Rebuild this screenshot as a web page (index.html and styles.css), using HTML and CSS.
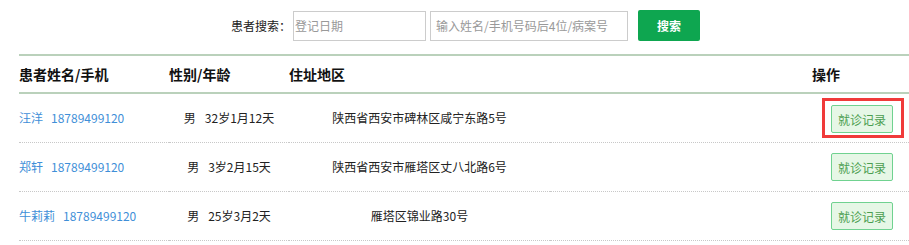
FILE: index.html
```html
<!DOCTYPE html>
<html lang="zh-CN">
<head>
    <meta charset="UTF-8">
    <meta name="viewport" content="width=device-width, initial-scale=1.0">
    <title>患者列表</title>
    <link rel="stylesheet" href="styles.css">
</head>
<body>
    <div class="search-bar">
        <label class="search-label" for="regDate">患者搜索：</label>
        <input type="text" id="regDate" class="date-input" placeholder="登记日期">
        <input type="text" id="keyword" class="keyword-input" placeholder="输入姓名/手机号码后4位/病案号">
        <button class="search-btn">搜索</button>
    </div>

    <div class="table-wrap">
        <table class="patient-table">
            <colgroup>
                <col class="col-name">
                <col class="col-gender">
                <col class="col-addr">
                <col class="col-blank">
                <col class="col-op">
            </colgroup>
            <thead>
                <tr>
                    <th>患者姓名/手机</th>
                    <th>性别/年龄</th>
                    <th>住址地区</th>
                    <th></th>
                    <th>操作</th>
                </tr>
            </thead>
            <tbody>
                <tr>
                    <td class="name"><span class="pname">汪洋</span>18789499120</td>
                    <td class="center"><span class="sex">男</span>32岁1月12天</td>
                    <td class="center">陕西省西安市碑林区咸宁东路5号</td>
                    <td></td>
                    <td class="op"><span class="highlight"><button class="record-btn">就诊记录</button></span></td>
                </tr>
                <tr>
                    <td class="name"><span class="pname">郑轩</span>18789499120</td>
                    <td class="center"><span class="sex">男</span>3岁2月15天</td>
                    <td class="center">陕西省西安市雁塔区丈八北路6号</td>
                    <td></td>
                    <td class="op"><button class="record-btn">就诊记录</button></td>
                </tr>
                <tr>
                    <td class="name"><span class="pname">牛莉莉</span>18789499120</td>
                    <td class="center"><span class="sex">男</span>25岁3月2天</td>
                    <td class="center">雁塔区锦业路30号</td>
                    <td></td>
                    <td class="op"><button class="record-btn">就诊记录</button></td>
                </tr>
            </tbody>
        </table>
    </div>
</body>
</html>
```

FILE: styles.css
```css
body {
    margin: 0;
    font-family: "Microsoft YaHei", "Noto Sans CJK SC", sans-serif;
    font-size: 12px;
    color: #222;
    background: #fff;
    overflow: hidden;
}

.search-bar {
    display: flex;
    align-items: center;
    padding: 10px 0 0 231px;
    height: 31px;
}

.search-label {
    line-height: 20px;
    margin-right: 2px;
}

.search-bar input {
    box-sizing: border-box;
    height: 30px;
    border: 1px solid #ccc;
    font-family: inherit;
    font-size: 12px;
    color: #333;
    outline: none;
}

.search-bar input::placeholder {
    color: #999;
}

.date-input {
    width: 133px;
    padding: 0 1px;
}

.keyword-input {
    width: 198px;
    margin-left: 4px;
    padding: 0 5px;
}

.search-btn {
    width: 62px;
    height: 31px;
    margin-left: 10px;
    border: none;
    border-radius: 2px;
    background-color: #0ea650;
    color: #fff;
    font-family: inherit;
    font-size: 12px;
    font-weight: bold;
    cursor: pointer;
}

.table-wrap {
    padding: 13px 0 0 19px;
}

.patient-table {
    width: 890px;
    border-collapse: collapse;
    table-layout: fixed;
}

.col-name { width: 150px; }
.col-gender { width: 120px; }
.col-addr { width: 261px; }
.col-blank { width: 262px; }
.col-op { width: 97px; }

.patient-table th {
    height: 36px;
    padding: 0;
    text-align: left;
    font-size: 14px;
    font-weight: bold;
    color: #111;
    border-top: 2px solid #bad1bb;
    border-bottom: 2px solid #bad1bb;
}

.patient-table td {
    height: 48px;
    padding: 0;
    line-height: 20px;
    border-bottom: 1px dotted #c8c8c8;
    white-space: nowrap;
}

.patient-table td.name {
    color: #3f8fd8;
}

.pname {
    margin-right: 8px;
}

.sex {
    margin-right: 9px;
}

.patient-table td.center {
    text-align: center;
}

.patient-table td.op {
    padding-left: 19px;
}

.highlight {
    display: inline-block;
    margin-left: -9px;
    padding: 4px 8px 2px 6px;
    border: 3px solid #f03a3a;
    line-height: 0;
}

.record-btn {
    box-sizing: border-box;
    width: 62px;
    height: 28px;
    padding: 0;
    border: 1px solid #70d290;
    border-radius: 2px;
    background-color: #e6f7e6;
    color: #4b9e4f;
    font-family: inherit;
    font-size: 12px;
    cursor: pointer;
    vertical-align: middle;
}
```
